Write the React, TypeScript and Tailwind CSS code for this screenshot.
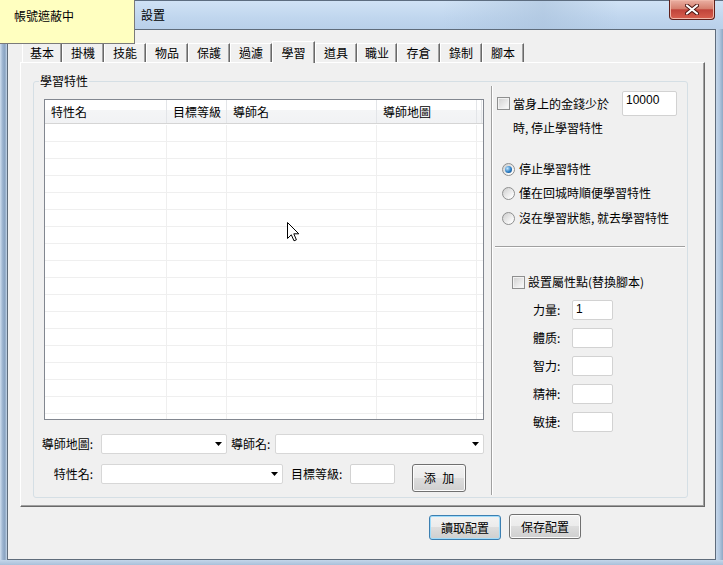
import React from "react";

const tabs: [string, string][] = [
  ["基本", "w-[40px]"],
  ["掛機", "w-[42px]"],
  ["技能", "w-[42px]"],
  ["物品", "w-[42px]"],
  ["保護", "w-[42px]"],
  ["過濾", "w-[42px]"],
  ["學習", "w-[43px]"],
  ["道具", "w-[42px]"],
  ["職业", "w-[40px]"],
  ["存倉", "w-[43px]"],
  ["錄制", "w-[42px]"],
  ["腳本", "w-[42px]"],
];

function Checkbox() {
  return (
    <span className="inline-block w-[13px] h-[13px] shrink-0 border border-[#8e8f8f] bg-[linear-gradient(135deg,#cfcfcf,#f6f6f6_85%)] shadow-[inset_0_0_0_1px_#f2f2f2]" />
  );
}

function Radio({ checked }: { checked?: boolean }) {
  return (
    <span className="inline-flex items-center justify-center w-[13px] h-[13px] shrink-0 rounded-full border border-[#8e8f8f] bg-[linear-gradient(135deg,#cdcdcd,#fbfbfb_80%)]">
      {checked && (
        <span className="w-[7px] h-[7px] rounded-full bg-[radial-gradient(circle_at_35%_35%,#c4e8ff,#2b7dc4_55%,#0d3d72)]" />
      )}
    </span>
  );
}

function Combo({ w }: { w: string }) {
  return (
    <div className={`${w} h-[20px] bg-white border border-[#d7d7d7] rounded-[2px] flex items-center justify-end pr-[4px]`}>
      <svg width="7" height="4" viewBox="0 0 7 4">
        <path d="M0 0 H7 L3.5 4 Z" fill="#000" />
      </svg>
    </div>
  );
}

function TextBox({ w, h, value }: { w: string; h: string; value?: string }) {
  return (
    <div className={`${w} ${h} bg-white border border-[#d2d2d2] rounded-[2px] pl-[3px] pt-[1px] text-[12px] leading-[14px] font-['Liberation_Sans',sans-serif] text-black`}>
      {value}
    </div>
  );
}

function Btn({ label, focused, extra }: { label: string; focused?: boolean; extra?: string }) {
  return (
    <div
      className={`${extra ?? ""} flex items-center justify-center rounded-[3px] border text-[12px] leading-[14px] bg-[linear-gradient(#f2f2f2,#ebebeb_50%,#dddddd_50%,#cfcfcf)] ${
        focused
          ? "border-[#3c7fb1] shadow-[inset_0_0_0_1px_#9fdcfb]"
          : "border-[#707070] shadow-[inset_0_0_0_1px_#fcfcfc]"
      }`}
    >
      {label}
    </div>
  );
}

const cols = ["w-[122px]", "w-[60px]", "w-[150px]", "w-[100px]"];
const headers = ["特性名", "目標等級", "導師名", "導師地圖"];

function Table() {
  const rows = Array.from({ length: 18 });
  return (
    <div className="ml-[10px] mt-[17px] w-[440px] h-[321px] border border-[#828790] bg-white overflow-hidden flex flex-col">
      <div className="h-[24px] shrink-0 flex border-b border-[#d5d5d5] bg-[linear-gradient(#ffffff,#ffffff_45%,#f4f5f6_45%,#f1f2f4)]">
        {headers.map((h, i) => (
          <div key={h} className={`${cols[i]} h-full border-r border-[#e3e5e8] pl-[6px] pt-[5px] leading-[14px]`}>
            {h}
          </div>
        ))}
        <div className="w-[5px] h-full border-r border-[#e3e5e8]" />
      </div>
      <div className="pt-[1px] flex flex-col">
        {rows.map((_, r) => (
          <div key={r} className="h-[17px] shrink-0 flex border-b border-[#efefef]">
            {cols.map((c, i) => (
              <div key={i} className={`${c} h-full border-r border-[#efefef]`} />
            ))}
          </div>
        ))}
      </div>
    </div>
  );
}

export default function App() {
  return (
    <div className="relative w-[723px] h-[565px] overflow-hidden bg-[#b7cce4] text-[12px] leading-[14px] text-black font-['Noto_Sans_CJK_TC','Noto_Sans_CJK_SC',sans-serif]">
      {/* title bar */}
      <div className="h-[29px] flex items-start border-t border-[#5d6d80] bg-[linear-gradient(#d0e2f5,#c0d6ee_60%,#b9d0ea)]">
        <div className="w-[141px] shrink-0" />
        <span className="mt-[7px]">設置</span>
        <div className="flex-1 h-full bg-[linear-gradient(90deg,transparent_55%,#aac2dc_75%,transparent_90%)] opacity-60" />
        <div className="mr-[8px] -mt-[1px] w-[46px] h-[20px] flex items-center justify-center rounded-b-[4px] border border-t-0 border-[#5e1f1a] bg-[linear-gradient(#eab0a3,#d6806f_45%,#c0443a_52%,#d8604f)] shadow-[inset_0_0_0_1px_#f0b8aa]">
          <svg width="14" height="11" viewBox="0 0 14 11">
            <path d="M2 1.5 L12 9.5 M12 1.5 L2 9.5" stroke="#4a1410" strokeWidth="4" strokeLinecap="round" />
            <path d="M2 1.5 L12 9.5 M12 1.5 L2 9.5" stroke="#ffffff" strokeWidth="2.2" strokeLinecap="round" />
          </svg>
        </div>
      </div>

      {/* frame + client */}
      <div className="flex h-[531px]">
        <div className="w-[7px] shrink-0 bg-[linear-gradient(90deg,#cfdeef,#9ab2ce_40%,#8aa4c2_70%,#c6d7ea)]" />
        <div className="w-[709px] shrink-0 border border-[#5f6c7b] bg-[#f0f0f0] flex flex-col">
          {/* tabs */}
          <div className="ml-[14px] mt-[11px] flex items-end">
            {tabs.map(([t, w]) =>
              t === "學習" ? (
                <div
                  key={t}
                  className={`${w} relative z-10 h-[22px] -mb-[1px] bg-[#f0f0f0] border-t border-l border-white border-r border-r-[#696969] shadow-[inset_-1px_0_0_#a0a0a0] flex justify-center pt-[4px]`}
                >
                  {t}
                </div>
              ) : (
                <div
                  key={t}
                  className={`${w} h-[19px] border-t border-l border-white border-r border-r-[#696969] shadow-[inset_-1px_0_0_#a0a0a0] flex items-center justify-center`}
                >
                  {t}
                </div>
              )
            )}
          </div>

          {/* tab panel */}
          <div className="ml-[12px] w-[685px] h-[445px] shrink-0 border border-t-white border-l-white border-r-[#696969] border-b-[#696969] shadow-[inset_-1px_-1px_0_#a0a0a0]">
            <div className="relative ml-[12px] mt-[18px] w-[655px] h-[417px] border border-[#d5dfe5] rounded-[3px] flex">
              <span className="absolute left-[5px] top-[-8px] px-[1px] bg-[#f0f0f0]">學習特性</span>

              {/* left column */}
              <div className="w-[457px] shrink-0 flex flex-col">
                <Table />
                <div className="mt-[14px] h-[20px] flex items-center">
                  <span className="w-[59px] text-right">導師地圖:</span>
                  <div className="ml-[8px]">
                    <Combo w="w-[126px]" />
                  </div>
                  <span className="ml-[4px] w-[44px]">導師名:</span>
                  <Combo w="w-[209px]" />
                </div>
                <div className="mt-[10px] flex items-start">
                  <span className="w-[59px] h-[20px] flex items-center justify-end">特性名:</span>
                  <div className="ml-[8px]">
                    <Combo w="w-[182px]" />
                  </div>
                  <span className="ml-[8px] w-[59px] h-[20px] flex items-center">目標等級:</span>
                  <TextBox w="w-[45px]" h="h-[20px]" />
                  <Btn label="添 加" extra="ml-[17px] w-[54px] h-[28px] [word-spacing:4px]" />
                </div>
              </div>

              {/* vertical separator */}
              <div className="mt-[4px] w-[2px] h-[409px] border-l border-[#a0a0a0] border-r border-r-white" />

              {/* right column */}
              <div className="flex-1 flex flex-col">
                <div className="mt-[9px] h-[25px] flex items-center">
                  <div className="ml-[4px] w-[125px] flex items-center gap-[3px]">
                    <Checkbox />
                    <span>當身上的金錢少於</span>
                  </div>
                  <TextBox w="w-[55px]" h="h-[25px]" value="10000" />
                </div>
                <div className="mt-[5px] ml-[20px]">時, 停止學習特性</div>

                <div className="mt-[22px] flex flex-col pl-[9px]">
                  <div className="h-[24px] flex items-center gap-[4px]">
                    <Radio checked />
                    <span>停止學習特性</span>
                  </div>
                  <div className="h-[24px] flex items-center gap-[4px]">
                    <Radio />
                    <span>僅在回城時順便學習特性</span>
                  </div>
                  <div className="h-[26px] flex items-center gap-[4px]">
                    <Radio />
                    <span>沒在學習狀態, 就去學習特性</span>
                  </div>
                </div>

                <div className="mt-[15px] ml-[2px] w-[190px] h-[2px] border-t border-[#a0a0a0] border-b border-b-white" />

                <div className="mt-[26px] ml-[19px] h-[16px] flex items-center gap-[3px]">
                  <Checkbox />
                  <span>設置屬性點(替換腳本)</span>
                </div>

                <div className="mt-[10px] ml-[40px] flex flex-col gap-[8px]">
                  {[
                    ["力量:", "1"],
                    ["體质:", ""],
                    ["智力:", ""],
                    ["精神:", ""],
                    ["敏捷:", ""],
                  ].map(([l, v]) => (
                    <div key={l} className="h-[20px] flex items-center">
                      <span className="w-[39px]">{l}</span>
                      <TextBox w="w-[41px]" h="h-[20px]" value={v} />
                    </div>
                  ))}
                </div>
              </div>
            </div>
          </div>

          {/* bottom buttons */}
          <div className="mt-[8px] ml-[421px] flex items-start gap-[8px]">
            <Btn label="讀取配置" focused extra="w-[72px] h-[25px]" />
            <Btn label="保存配置" extra="-mt-[1px] w-[72px] h-[25px]" />
          </div>
        </div>
        <div className="w-[7px] shrink-0 bg-[linear-gradient(90deg,#c6d7ea,#b2c8e0_50%,#8fa8c4)]" />
      </div>
      <div className="h-[5px] bg-[linear-gradient(#c4d6ea,#a9c0da)]" />

      {/* tooltip overlay */}
      <div className="absolute left-0 top-0 w-[135px] h-[44px] bg-[#ffffc0] border-r border-b border-[#7a7a7a] pl-[14px] pt-[9px]">
        帳號遮蔽中
      </div>

      {/* mouse cursor */}
      <svg className="absolute left-[287px] top-[222px]" width="13" height="20" viewBox="0 0 13 20">
        <path
          d="M0.5 0.5 L0.5 16.5 L4.3 12.8 L7 18.8 L9.4 17.8 L6.8 11.8 L11.8 11.8 Z"
          fill="#ffffff"
          stroke="#000000"
          strokeWidth="1"
          strokeLinejoin="miter"
        />
      </svg>
    </div>
  );
}
